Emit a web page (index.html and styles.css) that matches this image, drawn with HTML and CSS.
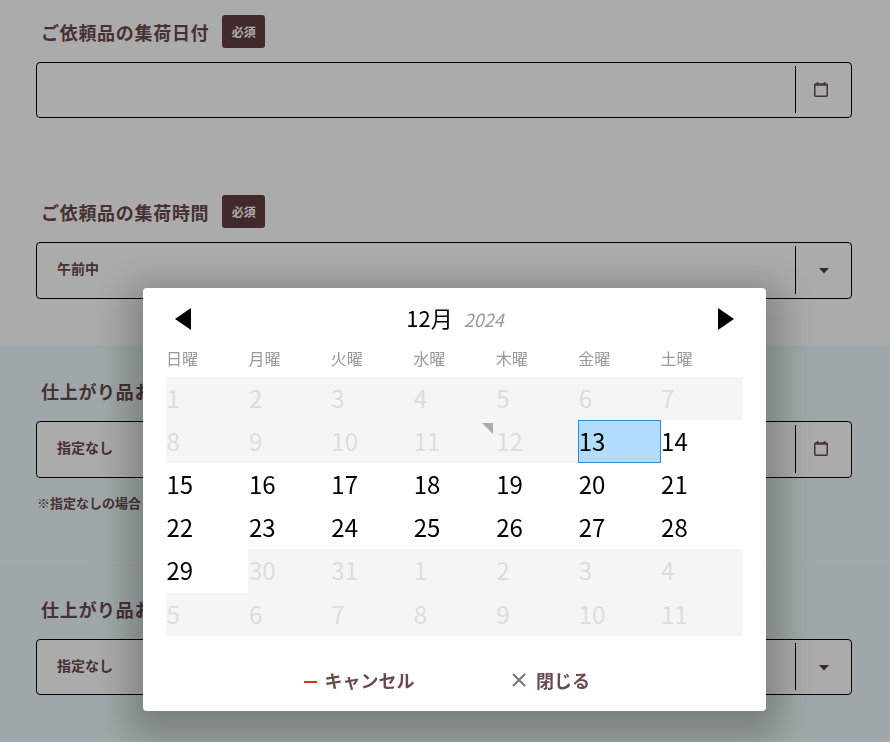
FILE: index.html
```html
<!DOCTYPE html>
<html lang="ja">
<head>
<meta charset="utf-8">
<title>集荷日付</title>
<link rel="stylesheet" href="styles.css">
</head>
<body>
<main class="page">
  <section class="band band-white">
    <div class="group">
      <div class="label-row"><h2 class="label">ご依頼品の集荷日付</h2><span class="badge">必須</span></div>
      <div class="field">
        <span class="value"></span>
        <span class="addon"><svg class="cal" viewBox="0 0 14 15"><path d="M3.5 0v2M10.5 0v2" class="cal-peg"/><rect x=".75" y="2" width="12.5" height="12.25" rx="1" class="cal-body"/><path d="M.75 3h12.5" class="cal-bar"/></svg></span>
      </div>
    </div>
    <div class="group group-next">
      <div class="label-row"><h2 class="label">ご依頼品の集荷時間</h2><span class="badge">必須</span></div>
      <div class="field field-tall">
        <span class="value">午前中</span>
        <span class="addon"><svg class="caret" viewBox="0 0 10 6"><path d="M0 0h10L5 5.5z"/></svg></span>
      </div>
    </div>
  </section>
  <section class="band band-blue band-third">
    <div class="group">
      <div class="label-row"><h2 class="label">仕上がり品お</h2></div>
      <div class="field field-tall">
        <span class="value">指定なし</span>
        <span class="addon"><svg class="cal" viewBox="0 0 14 15"><path d="M3.5 0v2M10.5 0v2" class="cal-peg"/><rect x=".75" y="2" width="12.5" height="12.25" rx="1" class="cal-body"/><path d="M.75 3h12.5" class="cal-bar"/></svg></span>
      </div>
      <p class="note">※指定なしの場合</p>
    </div>
  </section>
  <section class="band band-blue band-fourth">
    <div class="group">
      <div class="label-row"><h2 class="label">仕上がり品お</h2></div>
      <div class="field">
        <span class="value">指定なし</span>
        <span class="addon"><svg class="caret" viewBox="0 0 10 6"><path d="M0 0h10L5 5.5z"/></svg></span>
      </div>
    </div>
  </section>
</main>
<div class="overlay"></div>
<div class="picker" role="dialog">
  <header class="picker-head">
    <svg class="nav" viewBox="0 0 16 22"><path d="M16 0v22L0 11z"/></svg>
    <div class="month-title"><span class="month">12月</span><em class="year">2024</em></div>
    <svg class="nav" viewBox="0 0 16 22"><path d="M0 0v22l16-11z"/></svg>
  </header>
  <div class="weekdays">
    <span>日曜</span><span>月曜</span><span>火曜</span><span>水曜</span><span>木曜</span><span>金曜</span><span>土曜</span>
  </div>
  <div class="days">
    <span class="day off">1</span><span class="day off">2</span><span class="day off">3</span><span class="day off">4</span><span class="day off">5</span><span class="day off">6</span><span class="day off">7</span>
    <span class="day off">8</span><span class="day off">9</span><span class="day off">10</span><span class="day off today">11</span><span class="day off">12</span><span class="day selected">13</span><span class="day">14</span>
    <span class="day">15</span><span class="day">16</span><span class="day">17</span><span class="day">18</span><span class="day">19</span><span class="day">20</span><span class="day">21</span>
    <span class="day">22</span><span class="day">23</span><span class="day">24</span><span class="day">25</span><span class="day">26</span><span class="day">27</span><span class="day">28</span>
    <span class="day">29</span><span class="day off">30</span><span class="day off">31</span><span class="day off">1</span><span class="day off">2</span><span class="day off">3</span><span class="day off">4</span>
    <span class="day off">5</span><span class="day off">6</span><span class="day off">7</span><span class="day off">8</span><span class="day off">9</span><span class="day off">10</span><span class="day off">11</span>
  </div>
  <footer class="picker-foot">
    <button class="foot-btn" type="button"><span class="dash"></span>キャンセル</button>
    <button class="foot-btn" type="button"><svg class="close" viewBox="0 0 14 14"><path d="M1 1l12 12M13 1L1 13"/></svg>閉じる</button>
  </footer>
</div>
</body>
</html>
```
FILE: styles.css
```css
* { box-sizing: border-box; }
html, body { margin: 0; height: 100%; overflow: hidden; }
body { font-family: "Noto Sans CJK JP", "Noto Sans", sans-serif; color: #6a4a4c; background: #fff; }

.band { padding: 15px 38px 0 36px; }
.band-white { height: 345px; background: #fff; }
.band-blue { background: #eefafe; }
.band-third { height: 218px; padding-top: 29px; border-bottom: 1px solid #f6fcff; }
.band-fourth { height: 178px; padding-top: 29px; border-bottom: 1px solid #f6fcff; }

.group-next { margin-top: 77px; }
.label-row { display: flex; align-items: center; gap: 13px; height: 33px; margin: 0 0 14px 5px; }
.label { margin: 2px 0 0; font-size: 18px; font-weight: 700; letter-spacing: .7px; line-height: 31px; white-space: nowrap; }
.badge { width: 43px; height: 33px; display: flex; align-items: center; justify-content: center; background: #663e42; border-radius: 3px; color: #fff; font-size: 12px; font-weight: 700; }

.field { display: flex; height: 56px; background: #fff; border: 1px solid #000; border-radius: 4px; }
.field-tall { height: 57px; }
.value { flex: 1; padding-left: 20px; font-size: 14px; font-weight: 700; line-height: 50px; }
.addon { width: 56px; margin: 3px 0 4px; border-left: 1px solid #000; display: flex; align-items: center; justify-content: center; }
.cal { width: 14px; height: 15px; margin: -1px 5px 0 0; }
.cal-peg { stroke: #6a4a4c; stroke-width: 1.6; fill: none; }
.cal-body { stroke: #6a4a4c; stroke-width: 1.5; fill: none; }
.cal-bar { stroke: #6a4a4c; stroke-width: 1.5; fill: none; }
.caret { width: 10px; height: 6px; fill: #5a3a3c; margin: 2px 0 0 1px; }
.note { margin: 15px 0 0 1px; font-size: 13px; font-weight: 700; line-height: 20px; }

.overlay { position: fixed; inset: 0; background: rgba(0, 0, 0, .33); }
.picker { position: fixed; left: 143px; top: 288px; width: 623px; height: 423px; padding: 0 23px; background: #fff; border-radius: 4px; box-shadow: 0 12px 36px 16px rgba(0, 0, 0, .24); }

.picker-head { display: flex; align-items: center; justify-content: space-between; height: 61px; padding: 0 9px; }
.nav { width: 16px; height: 22px; fill: #000; }
.month-title { display: flex; align-items: baseline; gap: 11px; margin: -3px 0 0 1px; }
.month { font-size: 22px; color: #000; }
.year { font-size: 18px; color: #999; }

.weekdays { display: grid; grid-template-columns: repeat(7, 1fr); height: 27.7px; font-size: 16px; line-height: 18px; color: #999; }

.days { display: grid; grid-template-columns: repeat(7, 1fr); grid-auto-rows: 43.2px; }
.day { position: relative; padding-left: .5px; font-size: 24px; line-height: 41px; color: #000; }
.off { background: #f5f5f5; color: #ddd; }
.selected { background: #b1dcfb; box-shadow: inset 0 0 0 1px #2b8fd6; }
.today::before { content: ""; position: absolute; top: 3px; right: 3px; border-top: 11px solid #aaa; border-left: 11px solid transparent; }

.picker-foot { display: flex; justify-content: center; padding-top: 23px; }
.foot-btn { width: 192px; display: flex; align-items: center; justify-content: center; height: 42px; padding: 0; border: 0; background: none; font-family: inherit; font-size: 18px; font-weight: 700; color: #6a4a4c; }
.dash { width: 13px; height: 2px; margin: 5px 8px 0 1px; background: #d9301a; }
.close { width: 14px; height: 14px; margin: 0 10px 0 1px; stroke: #777; stroke-width: 2; fill: none; }
```
